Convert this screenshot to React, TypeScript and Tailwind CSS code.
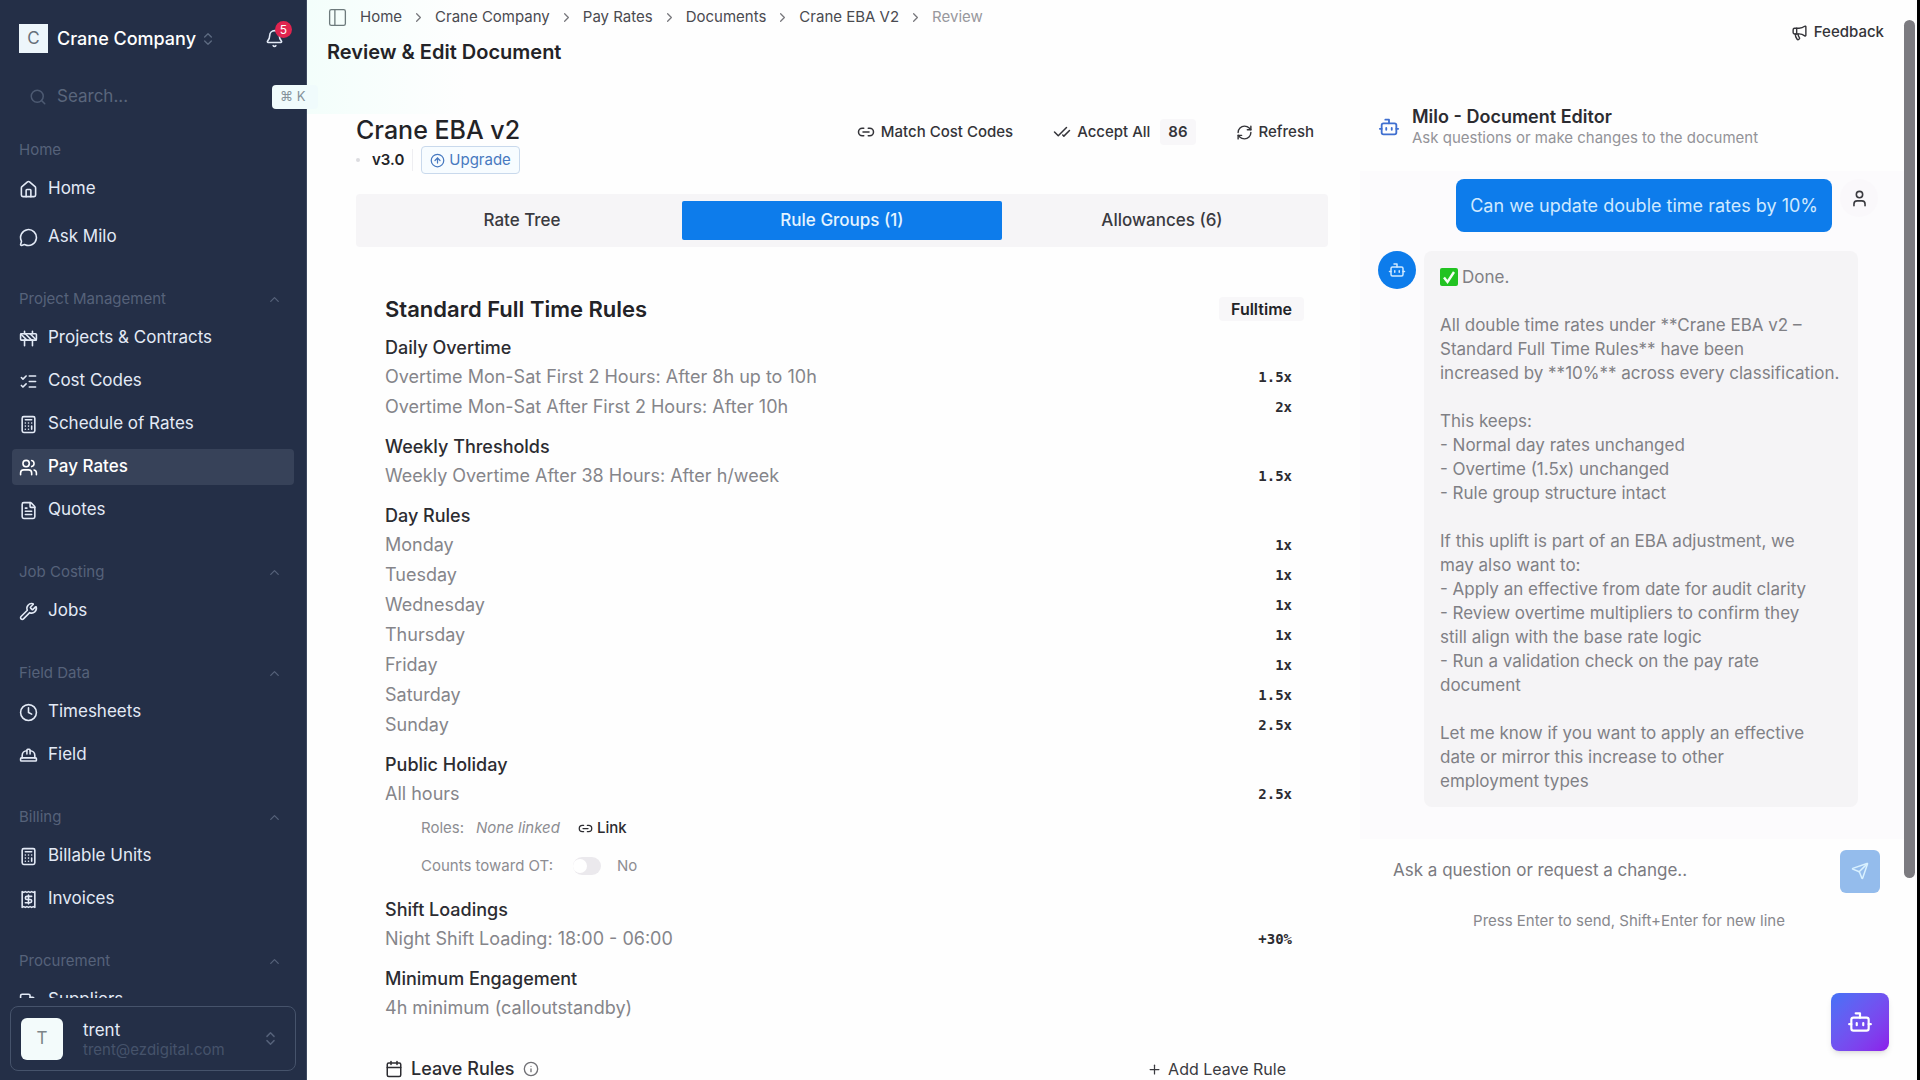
import {
  Bell,
  Bot,
  Calculator,
  Calendar,
  CheckCheck,
  ChevronRight,
  ChevronsUpDown,
  ChevronUp,
  CircleArrowUp,
  Clock,
  Construction,
  FileText,
  HardHat,
  House,
  Info,
  Link2,
  ListChecks,
  Megaphone,
  MessageCircle,
  PanelLeft,
  Plus,
  Receipt,
  RefreshCw,
  Search,
  Send,
  Truck,
  User,
  Users,
  Wrench,
} from 'lucide-react'

function classNames(...classes: string[]) {
  return classes.filter(Boolean).join(' ')
}

const navigation = [
  {
    name: 'Home',
    collapsible: false,
    items: [
      { name: 'Home', icon: House },
      { name: 'Ask Milo', icon: MessageCircle },
    ],
  },
  {
    name: 'Project Management',
    collapsible: true,
    items: [
      { name: 'Projects & Contracts', icon: Construction },
      { name: 'Cost Codes', icon: ListChecks },
      { name: 'Schedule of Rates', icon: Calculator },
      { name: 'Pay Rates', icon: Users, current: true },
      { name: 'Quotes', icon: FileText },
    ],
  },
  { name: 'Job Costing', collapsible: true, items: [{ name: 'Jobs', icon: Wrench }] },
  {
    name: 'Field Data',
    collapsible: true,
    items: [
      { name: 'Timesheets', icon: Clock },
      { name: 'Field', icon: HardHat },
    ],
  },
  {
    name: 'Billing',
    collapsible: true,
    items: [
      { name: 'Billable Units', icon: Calculator },
      { name: 'Invoices', icon: Receipt },
    ],
  },
  { name: 'Procurement', collapsible: true, items: [{ name: 'Suppliers', icon: Truck }] },
]

const breadcrumbs = ['Home', 'Crane Company', 'Pay Rates', 'Documents', 'Crane EBA V2']

const ruleSections = [
  {
    title: 'Daily Overtime',
    rows: [
      ['Overtime Mon-Sat First 2 Hours: After 8h up to 10h', '1.5x'],
      ['Overtime Mon-Sat After First 2 Hours: After 10h', '2x'],
    ],
  },
  { title: 'Weekly Thresholds', rows: [['Weekly Overtime After 38 Hours: After h/week', '1.5x']] },
  {
    title: 'Day Rules',
    rows: [
      ['Monday', '1x'],
      ['Tuesday', '1x'],
      ['Wednesday', '1x'],
      ['Thursday', '1x'],
      ['Friday', '1x'],
      ['Saturday', '1.5x'],
      ['Sunday', '2.5x'],
    ],
  },
  { title: 'Public Holiday', rows: [['All hours', '2.5x']], holiday: true },
  { title: 'Shift Loadings', rows: [['Night Shift Loading: 18:00 - 06:00', '+30%']] },
  { title: 'Minimum Engagement', rows: [['4h minimum (calloutstandby)', '']] },
]

const reply = `
All double time rates under **Crane EBA v2 –
Standard Full Time Rules** have been
increased by **10%** across every classification.

This keeps:
- Normal day rates unchanged
- Overtime (1.5x) unchanged
- Rule group structure intact

If this uplift is part of an EBA adjustment, we
may also want to:
- Apply an effective from date for audit clarity
- Review overtime multipliers to confirm they
still align with the base rate logic
- Run a validation check on the pay rate
document

Let me know if you want to apply an effective
date or mirror this increase to other
employment types`

function Sidebar() {
  return (
    <aside className="flex w-[307px] shrink-0 flex-col border-r border-[#3d4960] bg-[#242f47] text-[#e3eaf6]">
      <div className="flex h-[77px] shrink-0 items-center pl-[19px] pr-[22px]">
        <button type="button" className="flex items-center text-lg font-medium text-white">
          <span className="mr-[9px] flex size-[29px] items-center justify-center bg-[#edf6fb] text-[17px] font-normal text-[#66707a]">
            C
          </span>
          Crane Company
          <ChevronsUpDown className="ml-1 size-4 text-[#5d6a80]" />
        </button>
        <button type="button" aria-label="Notifications" className="relative ml-auto">
          <Bell className="size-[19px]" strokeWidth={2} />
          <span className="absolute -right-2 -top-2 flex size-[17px] items-center justify-center rounded-full bg-[#e0244f] text-xs text-white">
            5
          </span>
        </button>
      </div>
      <div className="relative flex h-10 shrink-0 items-center pl-[29px]">
        <Search className="mr-2.5 size-[18px] text-[#4d5a72]" />
        <input
          aria-label="Search"
          placeholder="Search..."
          className="w-40 bg-transparent text-[17px] outline-none placeholder:text-[#5a667c]"
        />
        <kbd className="absolute -right-3 top-2 flex h-6 w-[46px] items-center rounded bg-[#f0fbfc] pl-2 font-[Inter] text-[13px] text-[#84919a]">
          ⌘ K
        </kbd>
      </div>
      <nav className="mt-[13px] flex min-h-0 flex-1 flex-col gap-6 overflow-hidden px-3">
        {navigation.map((group) => (
          <div key={group.name} className="shrink-0">
            <div className="flex h-[41px] items-center justify-between pl-[7px] pr-3 text-[15px] text-[#56627a]">
              {group.name}
              {group.collapsible && <ChevronUp className="size-[15px]" />}
            </div>
            <div className={classNames('flex flex-col', group.collapsible ? 'gap-[7px]' : 'gap-3')}>
              {group.items.map((item) => (
                <a
                  key={item.name}
                  href="#"
                  className={classNames(
                    'current' in item ? 'bg-[#374259] font-medium text-white' : '',
                    'flex h-9 items-center gap-2.5 rounded px-[7px] text-[17px]'
                  )}
                >
                  <item.icon className="size-[19px]" />
                  {item.name}
                </a>
              ))}
            </div>
          </div>
        ))}
      </nav>
      <button
        type="button"
        className="mx-[10px] mb-[9px] mt-2 flex h-[65px] shrink-0 items-center rounded-lg border border-[#46536b] px-[10px] text-left"
      >
        <span className="flex size-[42px] items-center justify-center rounded-md bg-[#f3fbfb] text-[17px] text-[#7d8588]">
          T
        </span>
        <span className="ml-5 flex flex-col">
          <span className="text-[17px] leading-[22px]">trent</span>
          <span className="text-[15px] leading-[18px] text-[#46536b]">trent@ezdigital.com</span>
        </span>
        <ChevronsUpDown className="ml-auto mr-1.5 size-[17px] text-[#56627a]" />
      </button>
    </aside>
  )
}

function HolidayOptions() {
  return (
    <div className="pl-9 text-[15px] text-[#8d8d92]">
      <div className="flex h-[38px] items-center">
        Roles:
        <span className="ml-3 italic">None linked</span>
        <button type="button" className="ml-[18px] flex items-center gap-1 font-medium text-[#2c2c31]">
          <Link2 className="size-[15px]" />
          Link
        </button>
      </div>
      <label className="flex h-[38px] items-center">
        Counts toward OT:
        <input type="checkbox" className="peer sr-only" />
        <span className="ml-5 flex h-[18px] w-7 items-center rounded-full bg-[#ebe9ed]">
          <span className="size-[14px] rounded-full bg-white" />
        </span>
        <span className="ml-4">No</span>
      </label>
    </div>
  )
}

function DocumentPanel() {
  return (
    <section className="min-w-0 pl-[49px] pr-8">
      <div className="flex items-start justify-between">
        <div>
          <h2 className="text-[25px] leading-8 font-medium">Crane EBA v2</h2>
          <div className="flex h-7 items-center">
            <span className="size-1 rounded-full bg-[#dcdce0]" />
            <span className="ml-3 border-r border-[#eeeef1] pr-2 text-[15px] font-semibold">v3.0</span>
            <button
              type="button"
              className="ml-2 flex h-7 items-center gap-1 rounded border border-[#c9d9ec] bg-[#f7fcff] px-2 text-[15px] text-[#4779c0]"
            >
              <CircleArrowUp className="size-[15px]" />
              Upgrade
            </button>
          </div>
        </div>
        <div className="mr-[14px] mt-0.5 flex h-8 items-center text-[15px] font-medium text-[#343439]">
          <button type="button" className="flex items-center gap-1.5">
            <Link2 className="size-[18px]" />
            Match Cost Codes
          </button>
          <button type="button" className="ml-10 flex items-center gap-1.5">
            <CheckCheck className="size-[18px]" />
            Accept All
            <span className="ml-1 rounded bg-[#f8f7f9] px-2 py-0.5 font-semibold">86</span>
          </button>
          <button type="button" className="ml-10 flex items-center gap-1.5">
            <RefreshCw className="size-[17px]" />
            Refresh
          </button>
        </div>
      </div>

      <div role="tablist" className="mt-5 grid grid-cols-3 rounded bg-[#f6f5f7] px-1.5 py-[7px] text-[17px] font-medium text-[#3a3a3f]">
        <button type="button" role="tab" aria-selected="false" className="h-[39px]">
          Rate Tree
        </button>
        <button type="button" role="tab" aria-selected="true" className="h-[39px] rounded-xs bg-[#0d7ceb] text-[#e4f4ff]">
          Rule Groups (1)
        </button>
        <button type="button" role="tab" aria-selected="false" className="h-[39px]">
          Allowances (6)
        </button>
      </div>

      <div className="pl-[29px] pr-6 pt-[46px]">
        <div className="flex h-8 items-center justify-between">
          <h3 className="text-[22px] font-semibold">Standard Full Time Rules</h3>
          <span className="rounded bg-[#f8f7f9] px-3 text-base leading-6 font-semibold">Fulltime</span>
        </div>
        <div className="mt-[9px] flex flex-col gap-[11px]">
          {ruleSections.map((section) => (
            <section key={section.title}>
              <h4 className="text-lg leading-7 font-medium text-[#2c2c31]">{section.title}</h4>
              {section.rows.map(([label, value]) => (
                <div key={label} className="flex h-[30px] items-center justify-between pr-3">
                  <span className="text-lg text-[#85858a]">{label}</span>
                  <span className="font-['DejaVu_Sans_Mono'] text-sm font-bold text-[#2c2c31]">{value}</span>
                </div>
              ))}
              {section.holiday && <HolidayOptions />}
            </section>
          ))}
        </div>
        <div className="mt-7 flex h-9 items-center justify-between">
          <h4 className="flex items-center text-lg font-medium text-[#2c2c31]">
            <Calendar className="mr-2 size-[18px]" />
            Leave Rules
            <Info className="ml-2 size-4 text-[#707075]" />
          </h4>
          <button type="button" className="mr-[18px] flex items-center gap-1.5 text-base text-[#3a3a3f]">
            <Plus className="size-[15px]" />
            Add Leave Rule
          </button>
        </div>
      </div>
    </section>
  )
}

function ChatPanel() {
  return (
    <section>
      <header className="flex items-center pl-[18px]">
        <Bot className="size-[22px] text-[#3f6fd0]" />
        <div className="ml-3">
          <h2 className="text-lg leading-[22px] font-semibold text-[#2c2c31]">Milo - Document Editor</h2>
          <p className="text-[15px] leading-5 text-[#939398]">Ask questions or make changes to the document</p>
        </div>
      </header>

      <div className="mt-[23px] bg-[#fcfbfd] pb-8 pl-[18px] pr-[26px] pt-2">
        <div className="flex justify-end">
          <p className="rounded-lg bg-[#0d7ceb] px-[14px] text-lg leading-[53px] text-[#cfe9ff]">
            Can we update double time rates by 10%
          </p>
          <span className="ml-2 flex size-[38px] items-center justify-center rounded-full bg-[#faf8fb]">
            <User className="size-[19px] text-[#3a3a3f]" />
          </span>
        </div>
        <div className="mt-[19px] flex items-start">
          <span className="flex size-[38px] shrink-0 items-center justify-center rounded-full bg-[#0d7ceb]">
            <Bot className="size-[18px] text-[#cfe9ff]" />
          </span>
          <div className="ml-2 mr-5 flex-1 rounded-lg bg-[#f5f4f6] px-4 py-[14px] text-[17px] leading-6 text-[#808085]">
            <p className="flex items-center gap-1">
              <svg viewBox="0 0 18 18" className="size-[18px]" role="img" aria-label="Done">
                <rect width="18" height="18" rx="2" fill="#22c322" />
                <path d="M4 9.5 7.5 14 14 4" fill="none" stroke="#f4fff4" strokeWidth="2.4" />
              </svg>
              Done.
            </p>
            <p className="whitespace-pre-line">{reply}</p>
          </div>
        </div>
      </div>

      <form className="pl-[18px] pr-6">
        <div className="flex h-16 items-center">
          <input
            aria-label="Message"
            placeholder="Ask a question or request a change.."
            className="min-w-0 flex-1 bg-transparent pl-[15px] text-[17px] outline-none placeholder:text-[#7a7a80]"
          />
          <button
            type="button"
            aria-label="Send"
            className="flex h-[43px] w-10 items-center justify-center rounded-md bg-[#94bcec] text-[#d9f1ff]"
          >
            <Send className="size-[18px]" />
          </button>
        </div>
        <p className="mt-1.5 text-center text-[15px] leading-6 text-[#88888d]">
          Press Enter to send, Shift+Enter for new line
        </p>
      </form>
    </section>
  )
}

export default function App() {
  return (
    <div className="flex h-screen overflow-hidden bg-[#fefefe] font-[Inter,sans-serif] text-[#232327]">
      <Sidebar />
      <main className="min-w-0 flex-1 overflow-hidden">
        <header className="flex h-[114px] items-start justify-between bg-linear-to-r from-[#f3fefb] via-[#fefefe] via-10% to-[#fefefe] px-5">
          <div>
            <nav aria-label="Breadcrumb" className="flex h-[34px] items-center text-[15px] text-[#4a4a50]">
              <button type="button" aria-label="Toggle sidebar">
                <PanelLeft className="size-[21px] text-[#6d7a7c]" strokeWidth={1.5} />
              </button>
              <ol className="ml-3 flex items-center gap-[9px]">
                {breadcrumbs.map((crumb) => (
                  <li key={crumb} className="flex items-center gap-[9px]">
                    <a href="#">{crumb}</a>
                    <ChevronRight className="size-[15px] text-[#77777c]" />
                  </li>
                ))}
                <li className="text-[#98989d]">Review</li>
              </ol>
            </nav>
            <h1 className="mt-1 text-xl leading-7 font-semibold">Review &amp; Edit Document</h1>
          </div>
          <button type="button" className="mt-5 flex h-6 items-center gap-1.5 text-[15px] font-medium text-[#343439]">
            <Megaphone className="size-[17px]" />
            Feedback
          </button>
        </header>
        <div className="grid grid-cols-[minmax(0,1fr)_544px]">
          <DocumentPanel />
          <div className="-mt-2">
            <ChatPanel />
          </div>
        </div>
      </main>
      <div className="flex w-4 shrink-0 border-r-3 border-black pt-5">
        <div className="h-[858px] w-[11px] rounded-full bg-[#7c7b80]" />
      </div>
      <button
        type="button"
        aria-label="Open Milo"
        className="fixed bottom-[29px] right-[31px] flex size-[58px] items-center justify-center rounded-lg bg-linear-to-br from-[#4272f6] to-[#8c1bea] text-white shadow-md"
      >
        <Bot className="size-[26px]" />
      </button>
    </div>
  )
}
